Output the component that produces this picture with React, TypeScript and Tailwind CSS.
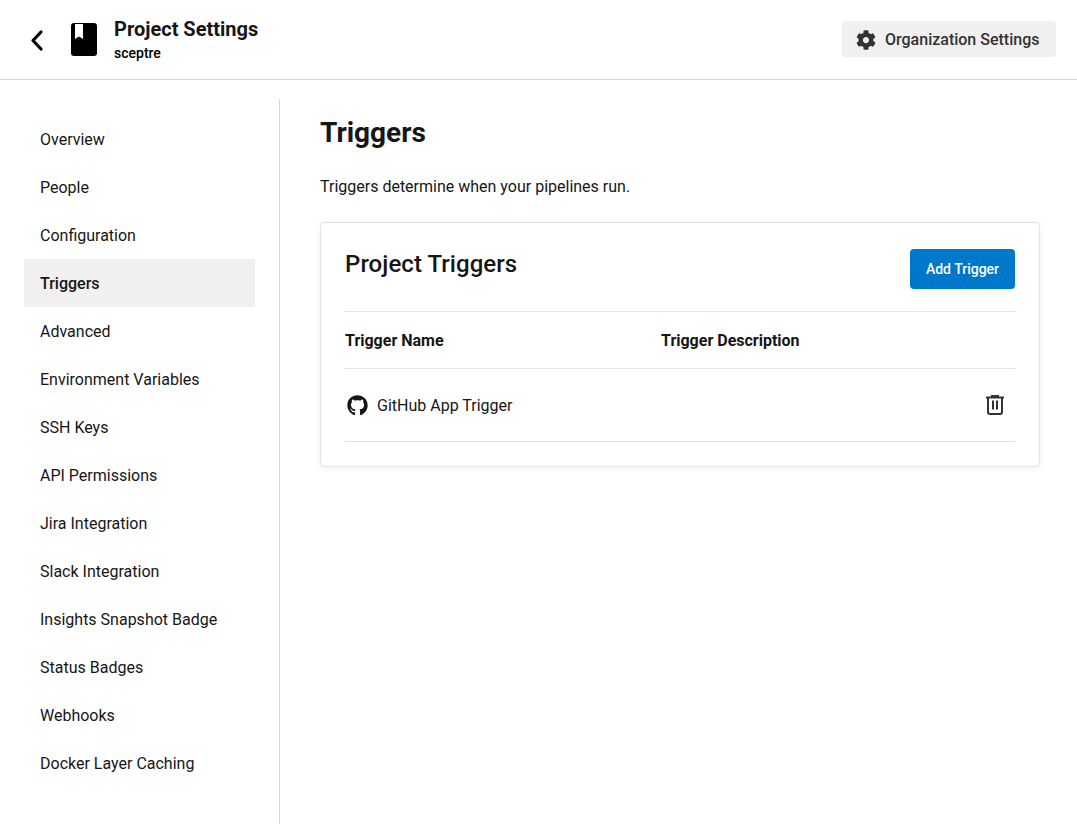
import React from "react";
import { FaGithub, FaCog } from "react-icons/fa";

const items = ["Overview","People","Configuration","Triggers","Advanced","Environment Variables","SSH Keys","API Permissions","Jira Integration","Slack Integration","Insights Snapshot Badge","Status Badges","Webhooks","Docker Layer Caching"];

export default function App() {
  return (
    <div className="h-[824px] overflow-hidden bg-white text-[#161616] font-['Roboto',sans-serif]">
      <header className="h-[80px] border-b border-[#d8d8d8] flex items-center justify-between pl-[24px] pr-[21px]">
        <div className="flex items-center">
          <svg width="26" height="26" viewBox="0 0 26 26" className="mr-[21px]" fill="none">
            <path d="M17 5 L9 13.5 L17 22" stroke="#000" strokeWidth="3.2" strokeLinecap="round" strokeLinejoin="round" />
          </svg>
          <svg width="26" height="33" viewBox="0 0 26 33" className="mr-[17px]">
            <path fillRule="evenodd" fill="#000" d="M3 0H23a3 3 0 0 1 3 3V30a3 3 0 0 1-3 3H3a3 3 0 0 1-3-3V3a3 3 0 0 1 3-3Z M4 1 V16 L8 13.5 L12 16 V1 Z" />
          </svg>
          <div className="flex flex-col">
            <span className="text-[20px] leading-[26px] font-bold">Project Settings</span>
            <span className="text-[14px] leading-[20px] font-medium text-black mt-[1px]">sceptre</span>
          </div>
        </div>
        <button className="h-[36px] w-[214px] -mt-[1px] pt-[1px] rounded-[4px] bg-[#f0f0f0] flex items-center pl-[14px] text-[#333] text-[16px] font-medium">
          <FaCog className="w-[20px] h-[20px] mr-[9px] text-[#333]" />
          Organization Settings
        </button>
      </header>
      <div className="flex pt-[19px]">
        <nav className="w-[280px] h-[725px] shrink-0 border-r border-[#d8d8d8] pl-[24px] pr-[24px] pt-[16px]">
          {items.map((t) => (
            <div key={t} className={`h-[48px] pl-[16px] pt-[2px] flex items-center text-[16px] ${t === "Triggers" ? "bg-[#f0f0f0] font-medium" : ""}`}>
              {t}
            </div>
          ))}
        </nav>
        <main className="flex-1 pl-[40px] pr-[37px]">
          <h1 className="text-[28px] leading-[36px] font-bold mt-[16px]">Triggers</h1>
          <p className="text-[16px] leading-[24px] mt-[24px]">Triggers determine when your pipelines run.</p>
          <section className="mt-[23px] h-[245px] rounded-[4px] border border-[#e3e3e3] shadow-[0_1px_6px_rgba(0,0,0,0.07)] px-[24px] pt-[26px]">
            <div className="flex justify-between h-[63px] border-b border-[#e3e3e3]">
              <h2 className="text-[24px] leading-[29px] font-medium tracking-[0.06px] mt-[1px]">Project Triggers</h2>
              <button className="w-[105px] h-[40px] rounded-[4px] bg-[#0078ca] text-white text-[14px] font-medium">Add Trigger</button>
            </div>
            <div className="flex items-center h-[57px] border-b border-[#e3e3e3] text-[16px] font-bold pt-[1px]">
              <div className="w-[316px]">Trigger Name</div>
              <div>Trigger Description</div>
            </div>
            <div className="flex items-center justify-between h-[73px] border-b border-[#e3e3e3] pl-[1px] pr-[11px] pt-[1px]">
              <div className="flex items-center text-[16px]">
                <FaGithub className="w-[21px] h-[21px] ml-[1px] mr-[9px] text-[#161616]" />
                GitHub App Trigger
              </div>
              <svg width="18" height="20" viewBox="0 0 18 20" fill="none" stroke="#333" strokeWidth="2" className="-mt-[1px]">
                <path d="M0 2.5H18" />
                <path d="M6 2V1H12V2" />
                <path d="M2 3V17a2 2 0 0 0 2 2h10a2 2 0 0 0 2-2V3" />
                <path d="M7 5.5V14.5M11 5.5V14.5" />
              </svg>
            </div>
          </section>
        </main>
      </div>
    </div>
  );
}
